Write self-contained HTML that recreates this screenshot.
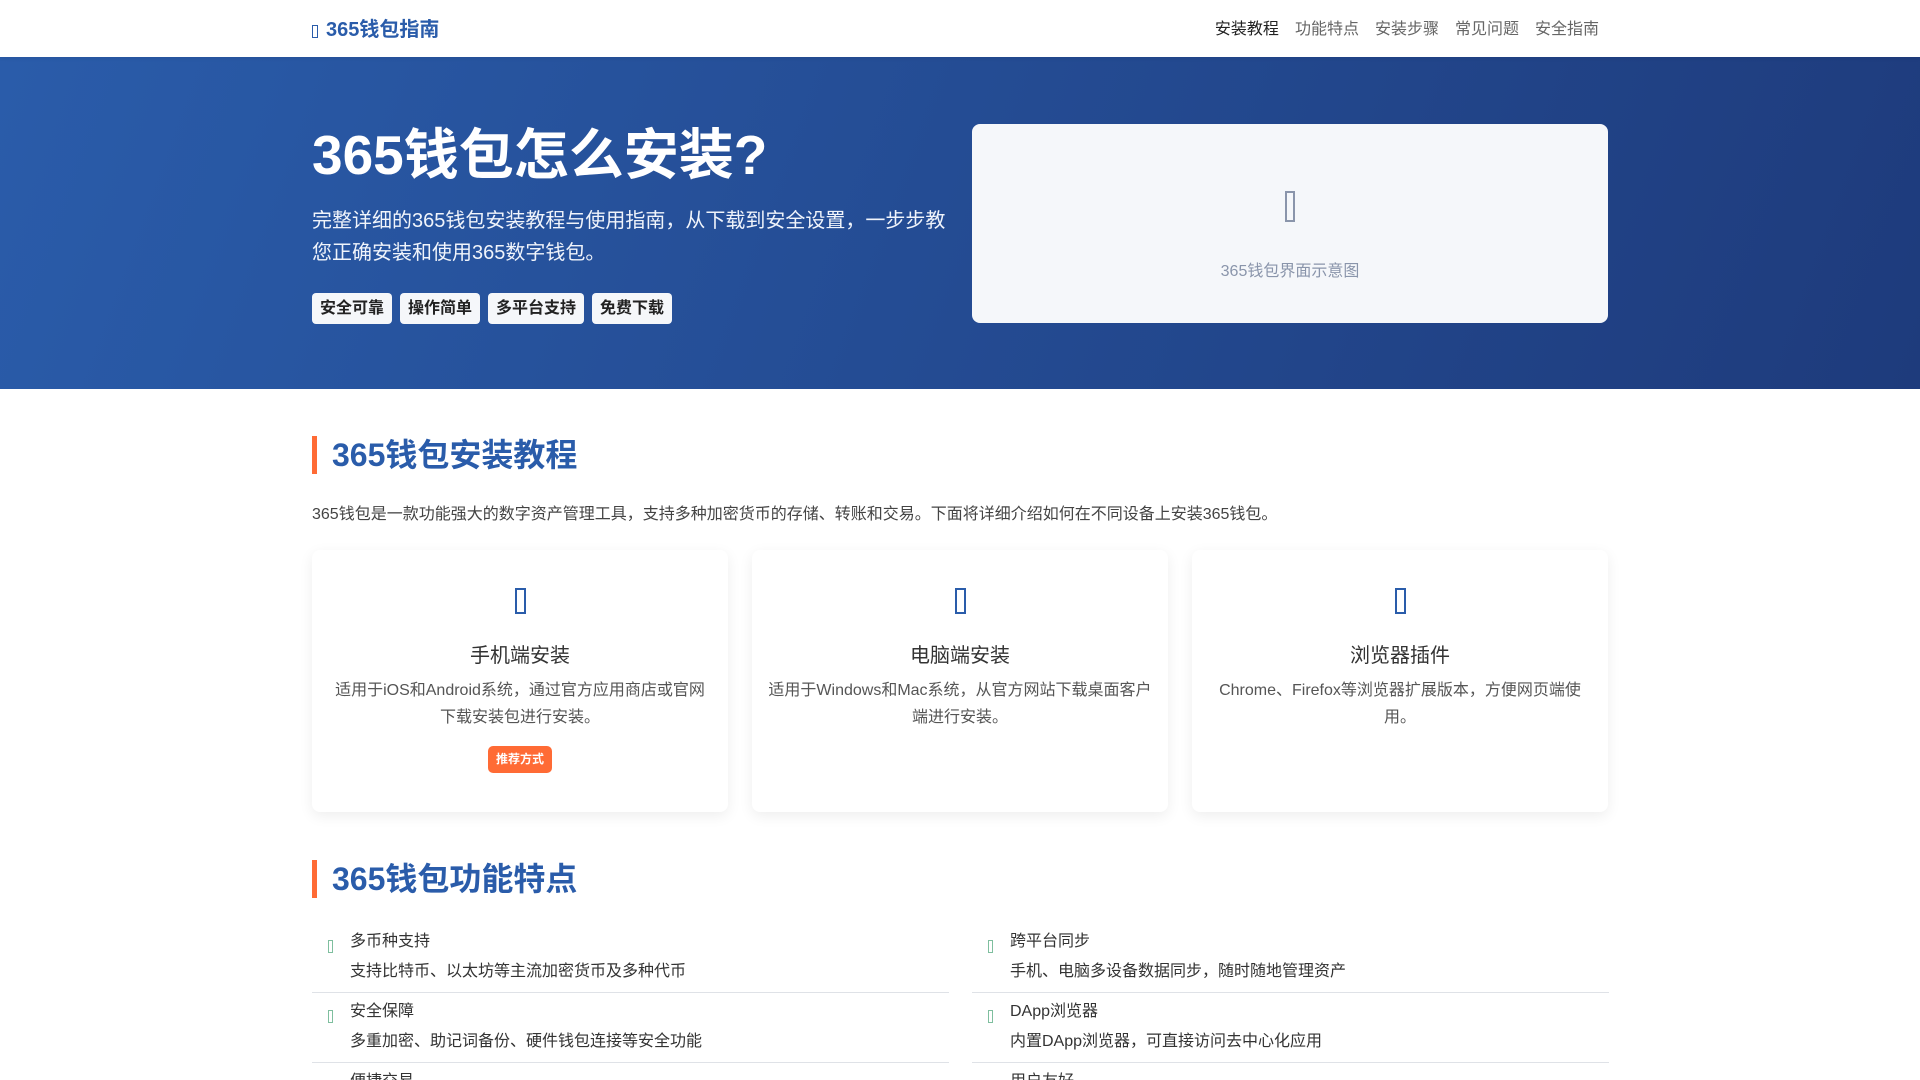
<!DOCTYPE html>
<html><head><meta charset="utf-8">
<style>
*{margin:0;padding:0;box-sizing:border-box}
html,body{width:1920px;height:1080px;overflow:hidden}
body{position:relative;background:#fff;font-family:"Liberation Sans","Noto Sans CJK SC",sans-serif;color:#333}
header{position:absolute;top:0;left:0;width:1920px;height:57px;background:#fff;box-shadow:0 1px 4px rgba(0,0,0,.08);z-index:2}
.logo{position:absolute;left:312px;top:13px;font-size:20px;font-weight:bold;color:#2a5caa}
.logo i{display:inline-block;width:6px;height:13px;border:1px solid #2a5caa;margin-right:8px;vertical-align:-2px}
nav{position:absolute;right:321px;top:15px;font-size:16px;color:#666}
nav span{margin-left:16px}
nav span:first-child{color:#222}
.hero{position:absolute;top:57px;left:0;width:1920px;height:332px;background:linear-gradient(110deg,#2a5caa,#1e3b7c)}
h1{position:absolute;left:312px;top:122px;font-size:55px;color:#fff;font-weight:bold;line-height:1.2}
.sub{position:absolute;left:312px;top:205px;width:640px;font-size:20px;line-height:32px;color:#f0f4fb}
.tags{position:absolute;left:312px;top:293px}
.tags span{display:inline-block;height:31px;line-height:31px;padding:0 8px;background:#f5f7fa;color:#222;font-weight:bold;font-size:16px;border-radius:4px;margin-right:8px}
.img{position:absolute;left:972px;top:124px;width:636px;height:199px;background:#f5f7fa;border-radius:8px;text-align:center}
.img i{display:block;margin:67px auto 0;width:10px;height:31px;border:2px solid #8a95ab}
.img p{margin-top:35px;font-size:16px;color:#8a95ab}
.st{position:absolute;left:312px;font-size:32px;font-weight:bold;color:#2a5caa;border-left:5px solid #ff6b35;padding-left:15px;line-height:38px}
.desc{position:absolute;left:312px;top:500px;font-size:16px;color:#444}
.card{position:absolute;top:550px;width:416px;height:262px;background:#fff;border-radius:8px;box-shadow:0 4px 14px rgba(0,0,0,.07);text-align:center}
.card i{display:block;margin:38px auto 0;width:11px;height:26px;border:2px solid #2a5caa}
.card h3{margin-top:25px;font-size:20px;font-weight:normal;color:#333}
.card p{margin:9px 16px 0;font-size:16px;line-height:27px;color:#555}
.badge{display:inline-block;margin-top:15px;height:27px;line-height:27px;padding:0 8px;background:#ff6b35;color:#fff;font-size:12px;font-weight:bold;border-radius:5px}
.fi{position:absolute;width:637px;height:64px;border-bottom:1px solid #dfe2e7}
.fi i{position:absolute;left:16px;top:11px;width:5px;height:13px;border:1px solid #7fbf9f}
.fi b{position:absolute;left:38px;top:-2px;font-weight:normal;font-size:16px;color:#333}
.fi s{position:absolute;left:38px;top:28px;text-decoration:none;font-size:16px;color:#333}
</style></head><body>
<header><div class="logo"><i></i>365钱包指南</div>
<nav><span>安装教程</span><span>功能特点</span><span>安装步骤</span><span>常见问题</span><span>安全指南</span></nav></header>
<div class="hero"></div>
<h1>365钱包怎么安装?</h1>
<div class="sub">完整详细的365钱包安装教程与使用指南，从下载到安全设置，一步步教您正确安装和使用365数字钱包。</div>
<div class="tags"><span>安全可靠</span><span>操作简单</span><span>多平台支持</span><span>免费下载</span></div>
<div class="img"><i></i><p>365钱包界面示意图</p></div>
<div class="st" style="top:436px">365钱包安装教程</div>
<div class="desc">365钱包是一款功能强大的数字资产管理工具，支持多种加密货币的存储、转账和交易。下面将详细介绍如何在不同设备上安装365钱包。</div>
<div class="card" style="left:312px"><i></i><h3>手机端安装</h3><p>适用于iOS和Android系统，通过官方应用商店或官网下载安装包进行安装。</p><span class="badge">推荐方式</span></div>
<div class="card" style="left:752px"><i></i><h3>电脑端安装</h3><p>适用于Windows和Mac系统，从官方网站下载桌面客户端进行安装。</p></div>
<div class="card" style="left:1192px"><i></i><h3>浏览器插件</h3><p>Chrome、Firefox等浏览器扩展版本，方便网页端使用。</p></div>
<div class="st" style="top:860px">365钱包功能特点</div>
<div class="fi" style="left:312px;top:929px"><i></i><b>多币种支持</b><s>支持比特币、以太坊等主流加密货币及多种代币</s></div>
<div class="fi" style="left:972px;top:929px"><i></i><b>跨平台同步</b><s>手机、电脑多设备数据同步，随时随地管理资产</s></div>
<div class="fi" style="left:312px;top:999px"><i></i><b>安全保障</b><s>多重加密、助记词备份、硬件钱包连接等安全功能</s></div>
<div class="fi" style="left:972px;top:999px"><i></i><b>DApp浏览器</b><s>内置DApp浏览器，可直接访问去中心化应用</s></div>
<div class="fi" style="left:312px;top:1069px"><i></i><b>便捷交易</b><s>内置兑换功能</s></div>
<div class="fi" style="left:972px;top:1069px"><i></i><b>用户友好</b><s>简洁界面</s></div>
</body></html>
